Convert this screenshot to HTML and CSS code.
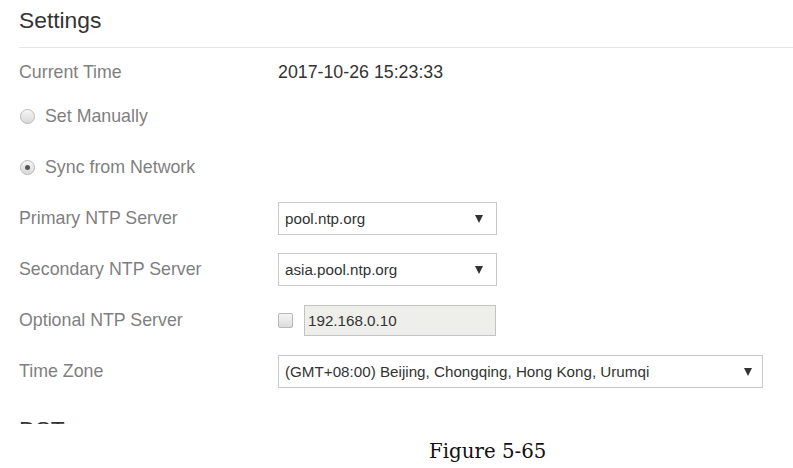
FILE: index.html
```html
<!DOCTYPE html>
<html>
<head>
<meta charset="utf-8">
<link rel="stylesheet" href="styles.css">
</head>
<body>
<div class="shot">
  <div class="panel">
    <h2 class="title">Settings</h2>
    <div class="form">
      <div class="row current">
        <span class="label">Current Time</span>
        <span class="value">2017-10-26 15:23:33</span>
      </div>
      <div class="rows">
        <div class="row">
          <label class="radio-label"><span class="radio"></span>Set Manually</label>
        </div>
        <div class="row">
          <label class="radio-label"><span class="radio checked"></span>Sync from Network</label>
        </div>
        <div class="row">
          <span class="label">Primary NTP Server</span>
          <div class="select small"><span>pool.ntp.org</span><svg class="arrow" width="8" height="8" viewBox="0 0 8 8"><polygon points="0,0 8,0 4,8" fill="#333"/></svg></div>
        </div>
        <div class="row">
          <span class="label">Secondary NTP Server</span>
          <div class="select small"><span>asia.pool.ntp.org</span><svg class="arrow" width="8" height="8" viewBox="0 0 8 8"><polygon points="0,0 8,0 4,8" fill="#333"/></svg></div>
        </div>
        <div class="row">
          <span class="label">Optional NTP Server</span>
          <div class="opt">
            <span class="checkbox"></span>
            <div class="input">192.168.0.10</div>
          </div>
        </div>
        <div class="row">
          <span class="label">Time Zone</span>
          <div class="select wide"><span>(GMT+08:00) Beijing, Chongqing, Hong Kong, Urumqi</span><svg class="arrow" width="8" height="8" viewBox="0 0 8 8"><polygon points="0,0 8,0 4,8" fill="#333"/></svg></div>
        </div>
      </div>
      <h2 class="title dst">DST</h2>
    </div>
  </div>
</div>
<p class="caption">Figure 5-65</p>
</body>
</html>
```
FILE: styles.css
```css
html, body {
  margin: 0;
  padding: 0;
  background: #fff;
}
body {
  width: 793px;
  height: 468px;
  overflow: hidden;
  font-family: "Liberation Sans", Arial, sans-serif;
}
.shot {
  height: 424px;
  overflow: hidden;
}
.panel {
  padding-left: 19px;
}
.title {
  margin: 0;
  font-weight: normal;
  font-size: 22.8px;
  line-height: 40px;
  color: #333;
}
.panel > .title {
  box-sizing: border-box;
  border-bottom: 1px solid #e6e6e6;
  height: 48px;
  padding-bottom: 8px;
}
.form {
  padding-top: 7px;
}
.row {
  display: flex;
  align-items: center;
  height: 33px;
}
.row.current {
  margin-bottom: 12px;
}
.current .label,
.current .value {
  position: relative;
  top: 1px;
}
.rows {
  display: flex;
  flex-direction: column;
  gap: 18px;
}
.label {
  width: 259px;
  flex: none;
  font-size: 17.8px;
  color: #7f7f7f;
}
.value {
  font-size: 17.8px;
  color: #333;
}
.radio-label {
  display: flex;
  align-items: center;
  font-size: 17.8px;
  color: #7f7f7f;
}
.radio {
  width: 13px;
  height: 13px;
  border-radius: 50%;
  border: 1px solid #b8b8b8;
  background: linear-gradient(#f6f6f6, #d9d9d9);
  margin-left: 1px;
  margin-right: 10px;
  position: relative;
  flex: none;
}
.radio.checked::after {
  content: "";
  position: absolute;
  left: 4px;
  top: 4px;
  width: 5px;
  height: 5px;
  border-radius: 50%;
  background: #555;
}
.select {
  height: 33px;
  box-sizing: border-box;
  border: 1px solid #c9c9c9;
  background: #fff;
  display: flex;
  align-items: center;
  justify-content: space-between;
  padding: 0 13px 0 6px;
  font-size: 15.2px;
  color: #333;
}
.select.small {
  width: 219px;
}
.select.wide {
  width: 485px;
  padding-right: 10px;
}
.arrow {
  flex: none;
}
.opt {
  display: flex;
  align-items: center;
}
.checkbox {
  width: 13px;
  height: 13px;
  border: 1px solid #b8b8b8;
  border-radius: 2px;
  background: linear-gradient(#f4f4f4, #dcdcdc);
  margin-right: 11px;
}
.input {
  width: 192px;
  height: 31px;
  box-sizing: border-box;
  border: 1px solid #c3c3c3;
  background: #eeeeea;
  font-size: 15.2px;
  color: #333;
  display: flex;
  align-items: center;
  padding-left: 3px;
}
.title.dst {
  margin-top: 21px;
}
.caption {
  margin: 0;
  padding-left: 429px;
  padding-top: 16px;
  font-family: "DejaVu Serif", "Liberation Serif", serif;
  font-size: 19.8px;
  line-height: 24px;
  color: #111;
}
```
